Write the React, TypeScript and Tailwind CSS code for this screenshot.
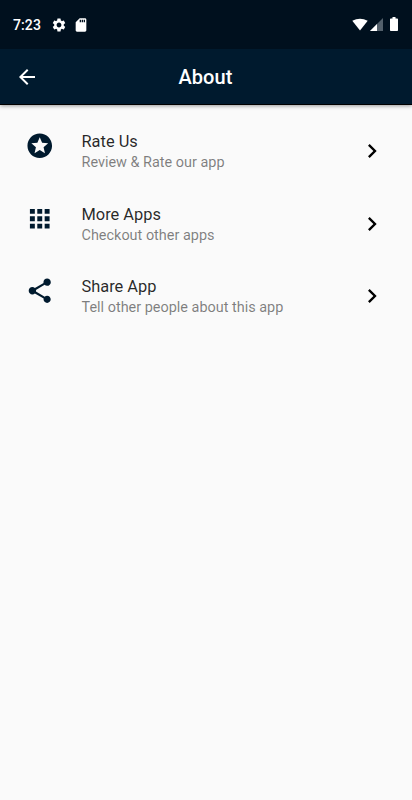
import { MdApps, MdArrowBack, MdChevronRight, MdSdCard, MdSettings, MdShare, MdStars } from "react-icons/md";

const items = [
  { title: "Rate Us", subtitle: "Review & Rate our app", icon: MdStars },
  { title: "More Apps", subtitle: "Checkout other apps", icon: MdApps },
  { title: "Share App", subtitle: "Tell other people about this app", icon: MdShare },
];

function StatusBar() {
  return (
    <div className="flex h-[49px] items-center bg-[#00101e] pl-[13px] pr-[14px] text-white">
      <span className="w-[38px] text-[14px] font-medium leading-4 tracking-[0.1px]">7:23</span>
      <MdSettings className="size-4" />
      <MdSdCard className="ml-[6px] size-4" />
      <div className="ml-auto flex items-center pb-px">
        {/* Wifi */}
        <svg className="h-[13px] w-[16px]" viewBox="0 0 17 13">
          <path d="M0.3 2.6Q8.5-2 16.7 2.6L8.5 12.8Z" fill="currentColor" />
        </svg>
        {/* Signal */}
        <svg className="ml-[2px] h-[13px] w-[13px]" viewBox="0 0 13 13">
          <path d="M0 13L13 0V13Z" fill="#53606b" />
          <path d="M0 13L7 6V13Z" fill="currentColor" />
        </svg>
        {/* Battery */}
        <svg className="ml-[7px] h-[14px] w-[8px]" viewBox="0 0 8 14">
          <path d="M2.5 0H5.5V1.4H7.2Q8 1.4 8 2.2V13.2Q8 14 7.2 14H0.8Q0 14 0 13.2V2.2Q0 1.4 0.8 1.4H2.5Z" fill="currentColor" />
        </svg>
      </div>
    </div>
  );
}

export default function App() {
  return (
    <div className="min-h-screen bg-[#fafafa] font-['Roboto',sans-serif]">
      <header className="shadow-[0_1px_4px_rgba(0,0,0,0.4)]">
        <StatusBar />
        <div className="grid h-14 grid-cols-[54px_1fr_55px] items-center border-b border-black bg-[#001a2e] text-white">
          <button className="justify-self-center" aria-label="Back">
            <MdArrowBack className="size-6" />
          </button>
          <h1 className="pt-px text-center text-[20px] font-medium leading-6 tracking-[0.1px]">About</h1>
        </div>
      </header>

      <main className="pt-[10.4px]">
        {items.map((item) => (
          <div key={item.title} className="flex h-[72.2px] items-start pl-[25px] pr-[26px] pt-4">
            <item.icon className="size-[29.5px] shrink-0 text-[#001a2e]" />
            <div className="ml-[27px] flex-1">
              <p className="text-[16.4px] leading-[21px] text-black/85">{item.title}</p>
              <p className="text-[14.45px] leading-[21px] text-black/50">{item.subtitle}</p>
            </div>
            <MdChevronRight className="mt-[6px] size-[28px] shrink-0 text-black" />
          </div>
        ))}
      </main>
    </div>
  );
}
